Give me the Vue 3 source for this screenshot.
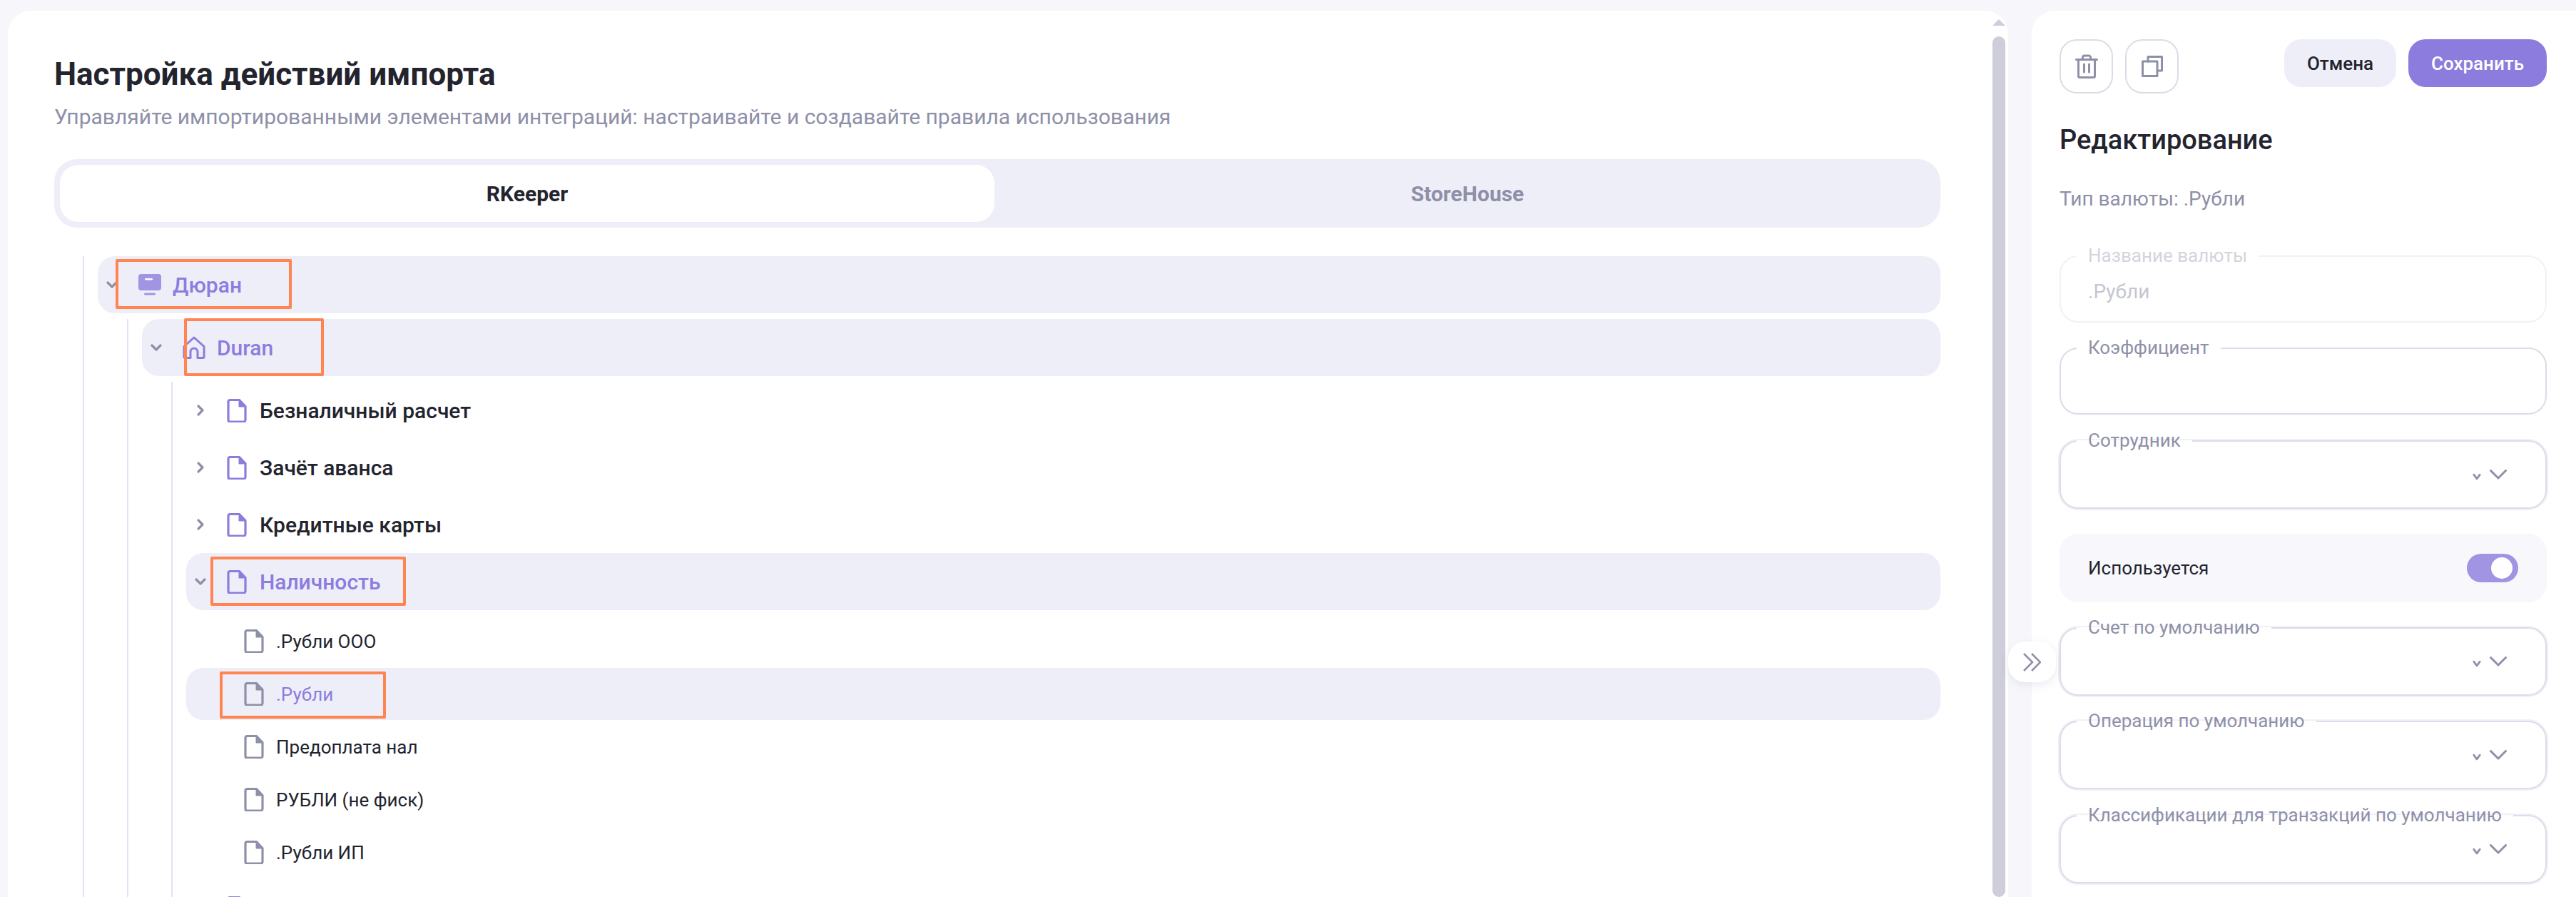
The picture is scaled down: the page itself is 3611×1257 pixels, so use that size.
<script setup>
const docOutline = 'M2 4A2.500 2.500 0 0 1 4.500 1.500H17.500L26 10.500V29.500A2.500 2.500 0 0 1 23.500 32H4.500A2.500 2.500 0 0 1 2 29.500Z'
const docFold = 'M17.500 2V10.500H26Z'
const groups = [
  { name: 'Безналичный расчет' },
  { name: 'Зачёт аванса' },
  { name: 'Кредитные карты' },
]
const children = [
  { name: '.Рубли ООО' },
  { name: '.Рубли', active: true },
  { name: 'Предоплата нал' },
  { name: 'РУБЛИ (не фиск)' },
  { name: '.Рубли ИП' },
]
const selects = ['Счет по умолчанию', 'Операция по умолчанию', 'Классификации для транзакций по умолчанию']
</script>

<template>
  <div class="page">
    <main class="card left">
      <div class="content">
        <h1 class="title">Настройка действий импорта</h1>
        <p class="subtitle">Управляйте импортированными элементами интеграций: настраивайте и создавайте правила использования</p>
        <div class="tabs">
          <div class="tab tab-active">RKeeper</div>
          <div class="tab">StoreHouse</div>
        </div>

        <div class="tree">
          <div class="row row-big row-sel">
            <svg class="chev" viewBox="0 0 24 24"><path d="M6 9l6 6 6-6" /></svg>
            <svg class="ic monitor" viewBox="0 0 32 30">
              <rect x="0" y="0" width="32" height="23" rx="4" fill="#a094e3" />
              <rect x="9" y="6" width="11" height="2.4" rx="1" fill="#fff" />
              <rect x="8" y="26.5" width="16" height="3" rx="1.5" fill="#a094e3" />
            </svg>
            <span class="lbl lbl-big lbl-acc">Дюран</span>
            <i class="mark mark-1"></i>
          </div>
          <div class="tree">
            <div class="row row-big row-sel">
              <svg class="chev" viewBox="0 0 24 24"><path d="M6 9l6 6 6-6" /></svg>
              <svg class="ic house" viewBox="0 0 32 32">
                <path d="M2 14.500L16 2l14 12.500V29a1.500 1.500 0 0 1-1.500 1.500H21V22a5 5 0 0 0-10 0v8.500H3.500A1.500 1.500 0 0 1 2 29z" />
              </svg>
              <span class="lbl lbl-big lbl-acc">Duran</span>
              <i class="mark mark-2"></i>
            </div>
            <div class="tree tree-3">
              <div v-for="g in groups" :key="g.name" class="row row-big">
                <svg class="chev chev-r" viewBox="0 0 24 24"><path d="M9 6l6 6-6 6" /></svg>
                <svg class="ic doc doc-acc" viewBox="0 0 28 33"><path :d="docOutline" /><path class="fold" :d="docFold" /></svg>
                <span class="lbl lbl-big lbl-doc">{{ g.name }}</span>
              </div>
              <div class="row row-big row-sel">
                <svg class="chev" viewBox="0 0 24 24"><path d="M6 9l6 6 6-6" /></svg>
                <svg class="ic doc doc-acc" viewBox="0 0 28 33"><path :d="docOutline" /><path class="fold" :d="docFold" /></svg>
                <span class="lbl lbl-big lbl-doc lbl-acc">Наличность</span>
                <i class="mark mark-3"></i>
              </div>
              <div class="leaves">
                <div v-for="c in children" :key="c.name" class="row row-leaf" :class="{ 'row-sel': c.active }">
                  <svg class="doc doc-leaf" viewBox="0 0 28 33"><path :d="docOutline" /><path class="fold" :d="docFold" /></svg>
                  <span class="lbl lbl-leaf" :class="{ 'lbl-acc': c.active }">{{ c.name }}</span>
                  <i v-if="c.active" class="mark mark-4"></i>
                </div>
              </div>
              <div class="row row-big">
                <span class="chev-gap"></span>
                <svg class="ic doc doc-acc" viewBox="0 0 28 33"><path :d="docOutline" /><path class="fold" :d="docFold" /></svg>
              </div>
            </div>
          </div>
        </div>
      </div>
      <div class="scrollbar">
        <span class="sb-arrow"></span>
        <span class="sb-thumb"></span>
      </div>
    </main>

    <aside class="card right">
      <button class="collapse" type="button" aria-label="Свернуть">
        <svg viewBox="0 0 25 26"><path d="M1 1l12 12L1 25M12 1l12 12-12 12" /></svg>
      </button>
      <div class="toolbar">
        <button class="icon-btn" type="button" aria-label="Удалить">
          <svg class="trash" viewBox="0 0 32 34">
            <path d="M1.500 7.500h29M10.500 7V4.500a2.500 2.500 0 0 1 2.500-2.500h6a2.500 2.500 0 0 1 2.500 2.500V7M4.500 8v22.500a2 2 0 0 0 2 2h19a2 2 0 0 0 2-2V8M12.500 14v11M19.500 14v11" />
          </svg>
        </button>
        <button class="icon-btn" type="button" aria-label="Копировать">
          <svg viewBox="0 0 30 30">
            <path d="M9 8V1.500h19.500V21H22" />
            <rect x="1.500" y="8" width="20.500" height="20.500" />
          </svg>
        </button>
        <span class="spacer"></span>
        <button class="btn btn-ghost" type="button">Отмена</button>
        <button class="btn btn-primary" type="button">Сохранить</button>
      </div>
      <h2 class="edit-title">Редактирование</h2>
      <p class="type-line">Тип валюты: .Рубли</p>

      <div class="fields">
        <fieldset class="field field-off">
          <legend>Название валюты</legend>
          <span class="val">.Рубли</span>
        </fieldset>
        <fieldset class="field">
          <legend>Коэффициент</legend>
        </fieldset>
        <fieldset class="field field-sel">
          <legend>Сотрудник</legend>
          <svg class="sm" viewBox="0 0 10 10"><path d="M2 3l3 4 3-4" /></svg>
          <svg class="lg" viewBox="0 0 24 14"><path d="M1.500 1.500L12 12 22.500 1.500" /></svg>
        </fieldset>
        <div class="switch-row">
          <span>Используется</span>
          <span class="switch"><span class="knob"></span></span>
        </div>
        <fieldset v-for="s in selects" :key="s" class="field field-sel">
          <legend>{{ s }}</legend>
          <svg class="sm" viewBox="0 0 10 10"><path d="M2 3l3 4 3-4" /></svg>
          <svg class="lg" viewBox="0 0 24 14"><path d="M1.500 1.500L12 12 22.500 1.500" /></svg>
        </fieldset>
      </div>
    </aside>
  </div>
</template>

<style>
html, body { margin: 0; overflow: hidden; background: #f7f7fb; }
</style>

<style scoped>
* { box-sizing: border-box; }
.page {
  width: 3611px;
  height: 1257px;
  overflow: hidden;
  display: flex;
  gap: 33px;
  padding: 15px 0 0 11px;
  background: #f7f7fb;
  font-family: Roboto, "Noto Sans", sans-serif;
  color: #23242e;
}
.card { background: #fff; border-radius: 32px 32px 0 0; }
.left { width: 2804px; display: flex; flex: none; overflow: hidden; }
.content { width: 2709px; padding: 0 0 0 65px; flex: none; }
.title { margin: 67px 0 0; font-size: 44px; line-height: 44px; font-weight: 700; }
.subtitle { margin: 20px 0 0; font-size: 30px; line-height: 36px; color: #8e90a8; }
.tabs {
  margin-top: 41px;
  height: 96px;
  padding: 8px;
  background: #eeeef8;
  border-radius: 32px;
  display: flex;
  gap: 8px;
}
.tab {
  flex: 1;
  display: flex;
  align-items: center;
  justify-content: center;
  font-size: 30px;
  font-weight: 700;
  color: #8e90a8;
  border-radius: 26px;
}
.tab-active { background: #fff; color: #23242e; }
.tree { margin-left: 40px; margin-top: 40px; padding-left: 19px; border-left: 2px solid #e2e2f4; }
.tree .tree { margin-left: 41px; margin-top: 8px; }
.tree .tree-3 { margin-top: 8px; }
.row { position: relative; display: flex; align-items: center; border-radius: 24px; }
.row-big { height: 80px; padding-left: 8px; }
.row-leaf { height: 73px; margin-bottom: 1px; padding-left: 81px; }
.row-sel { background: #eeeef8; }
.leaves { padding-top: 7px; }
.chev { width: 24px; height: 24px; flex: none; }
.chev-gap { width: 24px; flex: none; }
.chev path { fill: none; stroke: #8e90a8; stroke-width: 3.200; stroke-linecap: round; stroke-linejoin: round; }
.ic { margin-left: 25px; margin-right: 16px; width: 32px; flex: none; }
.monitor { height: 30px; }
.house { height: 32px; }
.house path { fill: none; stroke: #8b7cde; stroke-width: 3; stroke-linejoin: round; }
.doc { width: 28px; height: 33px; flex: none; }
.doc path { fill: none; stroke-width: 3.200; stroke-linejoin: round; }
.doc path.fold { stroke-width: 2; }
.doc-acc path { stroke: #8b7cde; }
.doc-acc path.fold { fill: #8b7cde; }
.doc-leaf { margin-right: 17px; }
.doc-leaf path { stroke: #8e90a8; }
.doc-leaf path.fold { fill: #8e90a8; }
.lbl { white-space: nowrap; }
.lbl-big { font-size: 30px; font-weight: 500; }
.lbl-doc { margin-left: 2px; }
.lbl-leaf { font-size: 26px; }
.lbl-acc { color: #8b7cde; }
.mark { position: absolute; border: 4px solid #ff8450; border-radius: 2px; pointer-events: none; }
.mark-1 { left: 25px; top: 4px; width: 247px; height: 70px; }
.mark-2 { left: 59px; top: -1px; width: 196px; height: 81px; }
.mark-3 { left: 34px; top: 5px; width: 274px; height: 69px; }
.mark-4 { left: 47px; top: 5px; width: 233px; height: 66px; }
.scrollbar { margin-left: 73px; width: 18px; flex: none; display: flex; flex-direction: column; align-items: center; }
.sb-arrow { margin-top: 12px; border: 9px solid transparent; border-top: 0; border-bottom-color: #cdced9; }
.sb-thumb { margin-top: 15px; width: 18px; flex: 1; background: #cdced9; border-radius: 9px; }
.right { position: relative; flex: 1; padding: 40px 41px 0 39px; border-radius: 32px 0 0 0; }
.toolbar { display: flex; align-items: flex-start; }
.icon-btn {
  width: 75px;
  height: 76px;
  margin-right: 17px;
  padding: 0;
  background: #fff;
  border: 2px solid #dcdce6;
  border-radius: 24px;
  display: flex;
  align-items: center;
  justify-content: center;
}
.icon-btn svg { width: 30px; height: 30px; fill: none; stroke: #8e90a8; stroke-width: 3; stroke-linecap: round; stroke-linejoin: round; }
.icon-btn .trash { width: 32px; height: 34px; }
.spacer { flex: 1; }
.btn {
  height: 67px;
  border: 0;
  border-radius: 24px;
  font-family: inherit;
  font-size: 26px;
  font-weight: 500;
}
.btn-ghost { width: 157px; margin-right: 17px; background: #eeeef8; color: #23242e; }
.btn-primary { width: 194px; background: #8b7cde; color: #fff; }
.edit-title { margin: 42px 0 0; font-size: 38px; line-height: 46px; font-weight: 500; }
.type-line { margin: 42px 0 0; font-size: 28px; line-height: 36px; color: #8e90a8; }
.fields { margin-top: 61px; display: flex; flex-direction: column; gap: 35.250px; }
.field {
  position: relative;
  margin: 0;
  height: 94px;
  padding: 0 22px;
  border: 2px solid #dcdcea;
  border-radius: 26px;
  min-width: 0;
}
.field legend {
  margin: 0;
  padding: 0 16px;
  font-size: 26px;
  line-height: 0;
  height: 2px;
  color: #8e90a8;
  background: #fff;
}
.field-off { border-color: #f1f1f6; }
.field-off legend { color: #d3d4dc; }
.val { display: block; margin: 32px 0 0 16px; font-size: 28px; line-height: 34px; color: #c5c6cf; }
.field-sel { height: 96px; box-shadow: 0 0 0 2px #f0f0f7; }
.sm, .lg { position: absolute; fill: none; stroke-linecap: round; stroke-linejoin: round; }
.sm { right: 89px; top: 42px; width: 14px; height: 14px; }
.sm path { stroke: #8e90a8; stroke-width: 2; }
.lg { right: 54px; top: 39px; width: 24px; height: 14px; }
.lg path { stroke: #8e90a8; stroke-width: 3; }
.switch-row {
  height: 96px;
  padding: 0 40px;
  background: #f7f7fc;
  border-radius: 26px;
  display: flex;
  align-items: center;
  justify-content: space-between;
  font-size: 26px;
}
.switch { width: 72px; height: 40px; padding: 5px 8px; background: #a094e3; border-radius: 20px; display: flex; justify-content: flex-end; }
.knob { width: 30px; height: 30px; background: #fff; border-radius: 50%; }
.collapse {
  position: absolute;
  left: -33px;
  top: 884px;
  width: 67px;
  height: 57px;
  padding: 0;
  border: 0;
  background: #fff;
  border-radius: 24px;
  box-shadow: 0 4px 14px rgba(120, 120, 170, .14);
  z-index: 2;
  display: flex;
  align-items: center;
  justify-content: center;
}
.collapse svg { width: 25px; height: 26px; fill: none; stroke: #8e90a8; stroke-width: 2.500; }
</style>
